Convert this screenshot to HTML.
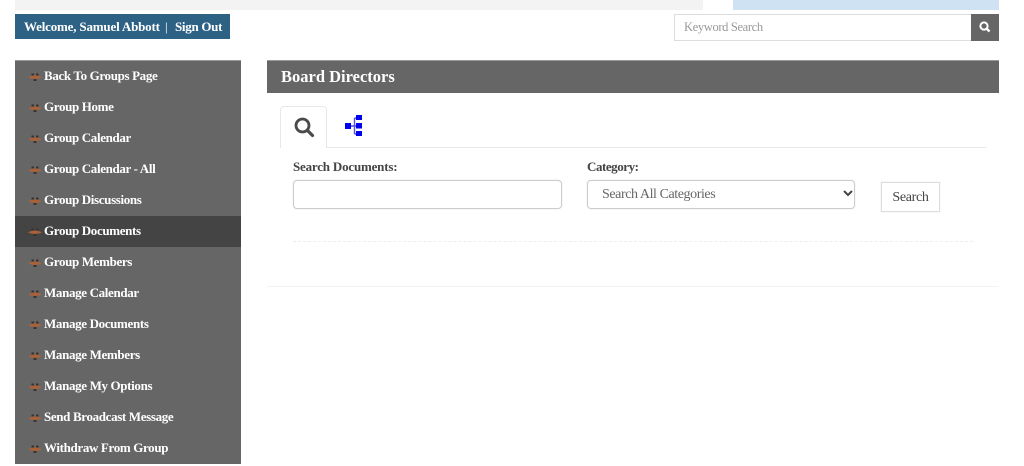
<!DOCTYPE html>
<html><head><meta charset="utf-8">
<style>
html,body{margin:0;padding:0;background:#fff;width:1024px;height:466px;overflow:hidden}
body{font-family:"Liberation Serif",serif;position:relative}
#w{position:absolute;left:0;top:0;width:1024px;height:466px;filter:blur(.3px)}
.a{position:absolute}
.nav{position:absolute;left:15px;top:60px;width:226px;height:404px;background:#666;border-top:1px solid #999;box-sizing:border-box}
.it{position:absolute;left:0;width:226px;height:31px;line-height:30px;color:#fff;font-weight:bold;font-size:13px;letter-spacing:-.35px;white-space:nowrap}
.it span{position:absolute;left:29px;top:0}
.it svg{position:absolute;left:13px;top:10px}
.lab{position:absolute;font-weight:bold;font-size:13px;color:#444;white-space:nowrap}
</style></head><body><div id="w">
<svg width="0" height="0" style="position:absolute"><symbol id="m" viewBox="0 0 14 10"><path d="M0 6.5Q7 2.5 14 6.5Q7 9.5 0 6.5Z" fill="#a8623a"/><path d="M3.5 2.5h2.5v2H3.5zM8 2.5h2.5v2H8zM5.5 8h3v2h-3z" fill="#3a3230"/></symbol></svg>
<div class="a" style="left:15px;top:0;width:688px;height:10px;background:#f3f3f3"></div>
<div class="a" style="left:733px;top:0;width:266px;height:10px;background:#cfe2f3"></div>
<div class="a" style="left:15px;top:14px;width:215px;height:25px;background:#2e6285;color:#fff;font-size:13px;font-weight:bold;line-height:25px;white-space:nowrap">
<span class="a" style="left:9px;letter-spacing:-.18px">Welcome, Samuel Abbott</span><span class="a" style="left:150px;font-weight:normal">|</span><span class="a" style="left:160px;letter-spacing:-.3px">Sign Out</span></div>
<div class="a" style="left:674px;top:14px;width:298px;height:27px;border:1px solid #ddd;box-sizing:border-box;color:#999;font-size:12.5px;letter-spacing:-.35px;line-height:25px;padding-left:9px">Keyword Search</div>
<div class="a" style="left:971px;top:14px;width:28px;height:27px;background:#666"><svg width="28" height="27" viewBox="0 0 28 27"><circle cx="13" cy="12" r="3.6" fill="none" stroke="#fff" stroke-width="2"/><path d="M15.8 14.8L18.5 17.5" stroke="#fff" stroke-width="2.4"/></svg></div>
<div class="nav">
<div class="it" style="top:0"><svg width="14" height="10"><use href="#m"/></svg><span>Back To Groups Page</span></div>
<div class="it" style="top:31px"><svg width="14" height="10"><use href="#m"/></svg><span>Group Home</span></div>
<div class="it" style="top:62px"><svg width="14" height="10"><use href="#m"/></svg><span>Group Calendar</span></div>
<div class="it" style="top:93px"><svg width="14" height="10"><use href="#m"/></svg><span>Group Calendar - All</span></div>
<div class="it" style="top:124px"><svg width="14" height="10"><use href="#m"/></svg><span>Group Discussions</span></div>
<div class="it" style="top:155px;background:#444"><svg width="14" height="10"><use href="#m"/></svg><span>Group Documents</span></div>
<div class="it" style="top:186px"><svg width="14" height="10"><use href="#m"/></svg><span>Group Members</span></div>
<div class="it" style="top:217px"><svg width="14" height="10"><use href="#m"/></svg><span>Manage Calendar</span></div>
<div class="it" style="top:248px"><svg width="14" height="10"><use href="#m"/></svg><span>Manage Documents</span></div>
<div class="it" style="top:279px"><svg width="14" height="10"><use href="#m"/></svg><span>Manage Members</span></div>
<div class="it" style="top:310px"><svg width="14" height="10"><use href="#m"/></svg><span>Manage My Options</span></div>
<div class="it" style="top:341px"><svg width="14" height="10"><use href="#m"/></svg><span>Send Broadcast Message</span></div>
<div class="it" style="top:372px"><svg width="14" height="10"><use href="#m"/></svg><span>Withdraw From Group</span></div>
</div>
<div class="a" style="left:267px;top:60px;width:732px;height:33px;background:#666;border-top:1px solid #999;box-sizing:border-box;color:#fff;font-weight:bold;font-size:16.5px;line-height:31px;padding-left:14px">Board Directors</div>
<div class="a" style="left:280px;top:147px;width:706px;height:1px;background:#e8e8e8"></div>
<div class="a" style="left:280px;top:106px;width:47px;height:42px;border:1px solid #e8e8e8;border-bottom:0;border-radius:4px 4px 0 0;box-sizing:border-box;background:#fff"></div>
<svg class="a" style="left:293px;top:116px" width="22" height="22" viewBox="0 0 22 22"><circle cx="9.5" cy="9.5" r="6.5" fill="none" stroke="#4a4a4a" stroke-width="2.8"/><path d="M14.5 14.5L19.5 19.5" stroke="#4a4a4a" stroke-width="3.2" stroke-linecap="round"/></svg>
<svg class="a" style="left:344px;top:115px" width="19" height="22" viewBox="0 0 19 22"><path d="M5 11H10.5M10.5 3V19M10.5 3H14M10.5 11H14M10.5 19H14" stroke="#5050e8" stroke-width="1.4" fill="none"/><rect x="1" y="8" width="6" height="6" fill="#0000f0"/><rect x="12" y="0" width="6" height="5" fill="#0000f0"/><rect x="12" y="8" width="6" height="5.5" fill="#0000f0"/><rect x="12" y="16" width="6" height="5" fill="#0000f0"/></svg>
<div class="lab" style="left:293px;top:159px;letter-spacing:-.2px">Search Documents:</div>
<div class="a" style="left:293px;top:180px;width:269px;height:29px;border:1px solid #ccc;border-radius:4px;box-sizing:border-box;box-shadow:0 0 1px #ccc"></div>
<div class="lab" style="left:587px;top:159px;letter-spacing:-.45px">Category:</div>
<div class="a" style="left:587px;top:180px;width:268px;height:29px;border:1px solid #ccc;border-radius:4px;box-sizing:border-box;box-shadow:0 0 1px #ccc;color:#666;font-size:14px;letter-spacing:-.42px;line-height:27px;padding-left:14px">Search All Categories</div>
<svg class="a" style="left:843px;top:190px" width="10" height="7" viewBox="0 0 10 7"><path d="M1 1L5 5L9 1" fill="none" stroke="#444" stroke-width="2"/></svg>
<div class="a" style="left:881px;top:182px;width:59px;height:30px;border:1px solid #ddd;box-sizing:border-box;box-shadow:0 0 1px #ddd;color:#444;font-size:14px;letter-spacing:-.3px;line-height:29px;text-align:center">Search</div>
<div class="a" style="left:293px;top:241px;width:680px;border-top:1px dashed #eee"></div>
<div class="a" style="left:267px;top:286px;width:732px;height:1px;background:#f3f3f3"></div>
</div></body></html>
